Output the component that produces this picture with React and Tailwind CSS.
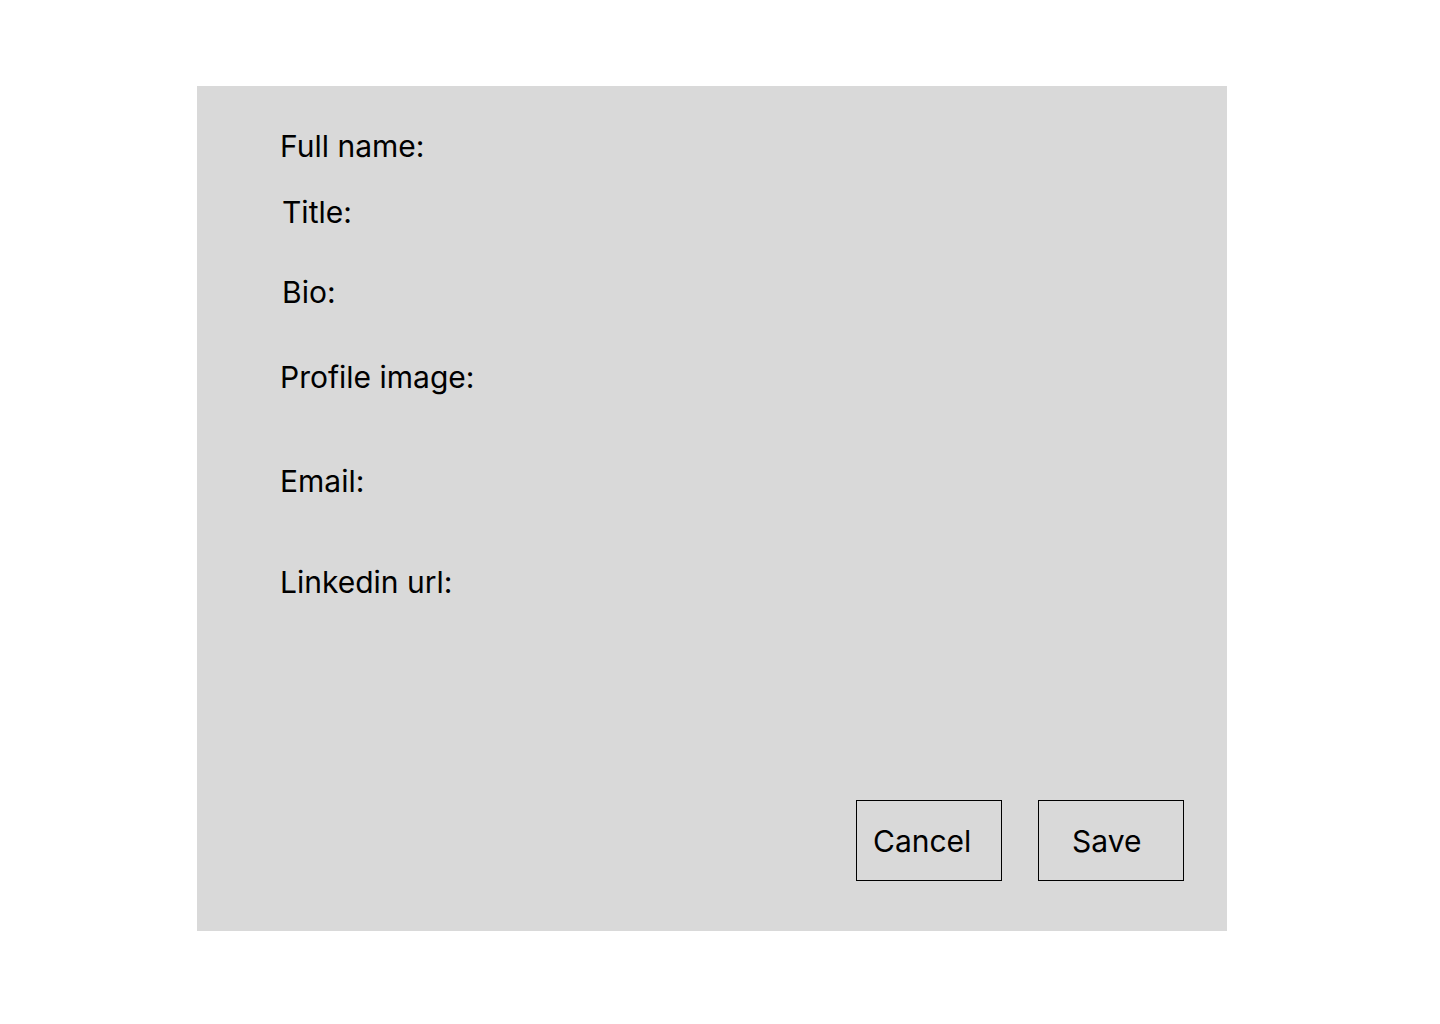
import React from 'react';

const fields = [
  { label: 'Full name:', cls: 'mt-0 pl-[83px]' },
  { label: 'Title:', cls: 'mt-[30px] pl-[85px]' },
  { label: 'Bio:', cls: 'mt-[44px] pl-[85px]' },
  { label: 'Profile image:', cls: 'mt-[49px] pl-[83px]' },
  { label: 'Email:', cls: 'mt-[68px] pl-[83px]' },
  { label: 'Linkedin url:', cls: 'mt-[65px] pl-[83px]' },
];

export default function App() {
  return (
    <div className="min-h-[1024px] w-[1440px] bg-white pt-[86px] font-['Inter',sans-serif] text-black">
      {/* Profile edit panel */}
      <div className="ml-[197px] flex h-[845px] w-[1030px] flex-col bg-[#d9d9d9] pt-[42px] pb-[50px] pr-[43px]">
        {fields.map((f) => (
          <div key={f.label} className={`text-[30px] leading-[36px] ${f.cls}`}>
            {f.label}
          </div>
        ))}

        <div className="flex-1" />

        <div className="flex justify-end gap-[36px]">
          <button
            type="button"
            className="flex h-[81px] w-[146px] items-center border border-black pl-[16px] text-left text-[30px] leading-[36px]"
          >
            Cancel
          </button>
          <button
            type="button"
            className="flex h-[81px] w-[146px] items-center border border-black pl-[33px] text-left text-[30px] leading-[36px]"
          >
            Save
          </button>
        </div>
      </div>
    </div>
  );
}
